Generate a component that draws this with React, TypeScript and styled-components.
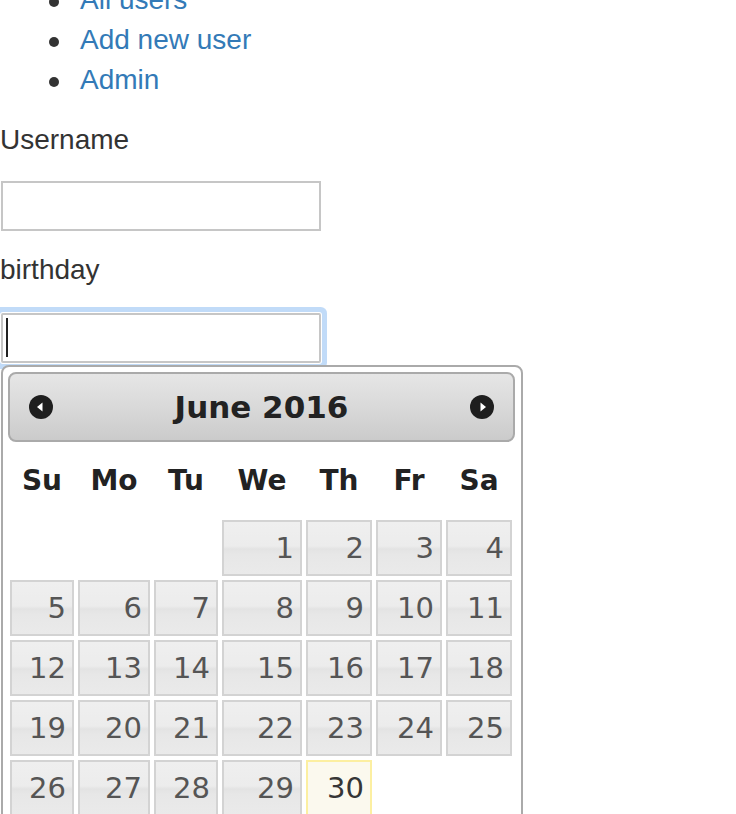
import React from "react";
import styled, { createGlobalStyle } from "styled-components";

const GlobalStyle = createGlobalStyle`
  html, body {
    margin: 0;
    padding: 0;
    overflow: hidden;
    background: #fff;
  }
  body {
    font-family: "Liberation Sans", Arial, sans-serif;
    font-size: 28px;
    line-height: 40px;
    color: #333;
  }
`;

type Day = { n: number; col: number; today?: boolean };

const COLS = "64px 72px 64px 80px 66px 66px 66px";
const dayNames = ["Su", "Mo", "Tu", "We", "Th", "Fr", "Sa"];

// June 2016 starts on a Wednesday
const firstCol = 3;
const days: Day[] = Array.from({ length: 30 }, (_, i) => ({
  n: i + 1,
  col: ((firstCol + i) % 7) + 1,
  today: i + 1 === 30,
}));

const App = () => {
  return (
    <>
      <GlobalStyle />
      <Page>
        <NavList>
          <NavItem>
            <NavLink href="#">All users</NavLink>
          </NavItem>
          <NavItem>
            <NavLink href="#">Add new user</NavLink>
          </NavItem>
          <NavItem>
            <NavLink href="#">Admin</NavLink>
          </NavItem>
        </NavList>

        <Label>Username</Label>
        <TextInput type="text" $gap={21} />

        <Label $gap={19}>birthday</Label>
        <FocusWrap>
          <TextInput type="text" $gap={0} $focused />
          <Caret />
        </FocusWrap>

        <Datepicker>
          <Header>
            <NavIcon title="Prev">
              <svg width="24" height="24" viewBox="0 0 24 24">
                <circle cx="12" cy="12" r="12" fill="#1e1e1e" />
                <polygon points="8,12 13.5,7.5 13.5,16.5" fill="#fff" />
              </svg>
            </NavIcon>
            <Title>June 2016</Title>
            <NavIcon title="Next">
              <svg width="24" height="24" viewBox="0 0 24 24">
                <circle cx="12" cy="12" r="12" fill="#1e1e1e" />
                <polygon points="10.5,7.5 16,12 10.5,16.5" fill="#fff" />
              </svg>
            </NavIcon>
          </Header>

          <DayNames>
            {dayNames.map((d) => (
              <DayName key={d}>{d}</DayName>
            ))}
          </DayNames>

          <DayGrid>
            {days.map((d) => (
              <DayCell
                key={d.n}
                $today={d.today}
                style={d.n === 1 ? { gridColumnStart: d.col } : undefined}
              >
                {d.n}
              </DayCell>
            ))}
          </DayGrid>
        </Datepicker>
      </Page>
    </>
  );
};

export default App;

const Page = styled.div`
  display: flex;
  flex-direction: column;
  align-items: flex-start;
`;

const NavList = styled.ul`
  margin: -20px 0 20px;
  padding-left: 80px;
  list-style: none;
`;

const NavItem = styled.li`
  position: relative;

  &::before {
    content: "";
    position: absolute;
    left: -31px;
    top: 17px;
    width: 10px;
    height: 10px;
    border-radius: 50%;
    background: #333;
  }
`;

const NavLink = styled.a`
  color: #337ab7;
  text-decoration: none;
`;

const Label = styled.label<{ $gap?: number }>`
  display: block;
  margin-top: ${(p) => p.$gap ?? 0}px;
  height: 40px;
`;

const FocusWrap = styled.div`
  position: relative;
  margin-top: 23px;
`;

const TextInput = styled.input<{ $gap: number; $focused?: boolean }>`
  display: block;
  box-sizing: border-box;
  margin: ${(p) => p.$gap}px 0 0 1px;
  width: 320px;
  height: 50px;
  border: 2px solid #c6c6c6;
  border-radius: ${(p) => (p.$focused ? "2px" : "0")};
  padding: 0 8px;
  font: inherit;
  background: #fff;
  outline: none;
  box-shadow: ${(p) =>
    p.$focused ? "0 0 0 1px #fff, 0 0 0 6px #c1dbf8" : "none"};
`;

const Caret = styled.span`
  position: absolute;
  left: 6px;
  top: 5px;
  width: 2px;
  height: 39px;
  background: #222;
`;

const Datepicker = styled.div`
  position: relative;
  box-sizing: border-box;
  width: 522px;
  margin: 2px 0 0 1px;
  padding: 5px 6px 20px 5px;
  background: #fff;
  border: 2px solid #aaa;
  border-radius: 8px;
  font-family: "DejaVu Sans", Verdana, sans-serif;
  color: #222;
`;

const Header = styled.div`
  display: flex;
  align-items: center;
  justify-content: space-between;
  box-sizing: border-box;
  height: 70px;
  padding: 0 19px 0 19px;
  border: 2px solid #aaa;
  border-radius: 8px;
  background: linear-gradient(to bottom, #e6e6e6 0%, #d9d9d9 50%, #cbcbcb 100%);
`;

const NavIcon = styled.span`
  display: flex;
  width: 24px;
  height: 24px;
  cursor: pointer;
`;

const Title = styled.div`
  flex: 1;
  text-align: center;
  font-size: 31px;
  font-weight: bold;
  line-height: 66px;
  color: #222;
`;

const DayNames = styled.div`
  display: grid;
  grid-template-columns: ${COLS};
  column-gap: 4px;
  padding-left: 2px;
  height: 78px;
  align-items: center;
`;

const DayName = styled.div`
  text-align: center;
  font-size: 28px;
  font-weight: bold;
  color: #222;
`;

const DayGrid = styled.div`
  display: grid;
  grid-template-columns: ${COLS};
  grid-auto-rows: 56px;
  gap: 4px;
  padding-left: 2px;
`;

const DayCell = styled.div<{ $today?: boolean }>`
  display: flex;
  align-items: center;
  justify-content: flex-end;
  box-sizing: border-box;
  padding-right: 6px;
  font-size: 29px;
  border: 2px solid ${(p) => (p.$today ? "#fcefa1" : "#d3d3d3")};
  color: ${(p) => (p.$today ? "#363636" : "#555")};
  background: ${(p) =>
    p.$today
      ? "#fbf9ee"
      : "linear-gradient(to bottom, #efefef 0%, #ececec 46%, #e3e3e3 52%, #e7e7e7 62%, #eaeaea 100%)"};
  cursor: pointer;
`;
